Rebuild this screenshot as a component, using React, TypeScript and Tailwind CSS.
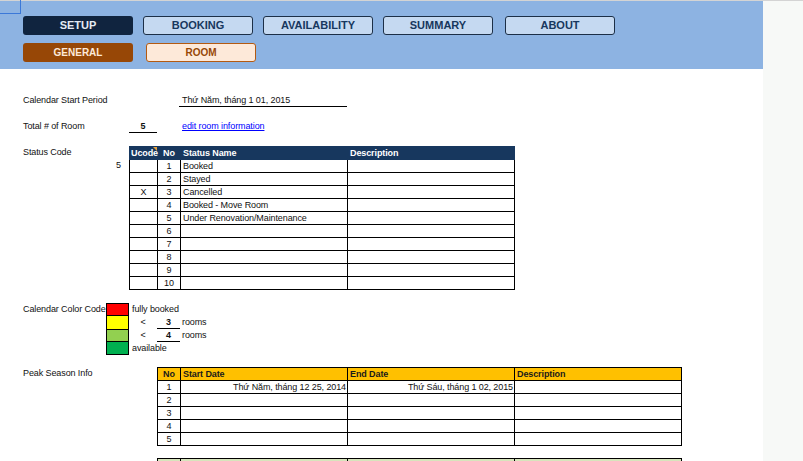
import React from "react";

const font = { fontFamily: '"Liberation Sans", Arial, sans-serif' };

const statusRows = [
  { ucode: "", no: 1, name: "Booked" },
  { ucode: "", no: 2, name: "Stayed" },
  { ucode: "X", no: 3, name: "Cancelled" },
  { ucode: "", no: 4, name: "Booked - Move Room" },
  { ucode: "", no: 5, name: "Under Renovation/Maintenance" },
  { ucode: "", no: 6, name: "" },
  { ucode: "", no: 7, name: "" },
  { ucode: "", no: 8, name: "" },
  { ucode: "", no: 9, name: "" },
  { ucode: "", no: 10, name: "" },
];

const peakRows = [
  { no: 1, start: "Thứ Năm, tháng 12 25, 2014", end: "Thứ Sáu, tháng 1 02, 2015" },
  { no: 2, start: "", end: "" },
  { no: 3, start: "", end: "" },
  { no: 4, start: "", end: "" },
  { no: 5, start: "", end: "" },
];

function NavButton({ label, active }: { label: string; active?: boolean }) {
  return (
    <div
      className={`w-[110px] h-[19px] rounded-[3px] flex items-center justify-center text-[11px] font-bold tracking-normal ${
        active
          ? "bg-[#10243f] text-[#e4ebf4]"
          : "bg-[#c5d9f1] text-[#17375e] border-[1.5px] border-[#1c2f47]"
      }`}
    >
      {label}
    </div>
  );
}

function SubButton({ label, active }: { label: string; active?: boolean }) {
  return (
    <div
      className={`w-[110px] h-[19px] rounded-[3px] flex items-center justify-center text-[10px] font-bold tracking-normal ${
        active
          ? "bg-[#974706] text-[#fde9d9]"
          : "bg-[#fde9d9] text-[#974706] border-[1.5px] border-[#b35a12]"
      }`}
    >
      {label}
    </div>
  );
}

export default function App() {
  return (
    <div className="relative w-[803px] h-[461px] overflow-hidden bg-white flex items-start text-[9px] tracking-[-0.1px] text-[#111]" style={font}>
      <div className="w-[763px] shrink-0">
        {/* grid strip */}
        <div className="h-[1px] bg-[#d4d4d4]" />
        {/* nav panel */}
        <div className="h-[68px] bg-[#8db3e2] pl-[23px] pt-[15px]">
          <div className="flex gap-[10px]">
            <NavButton label="SETUP" active />
            <NavButton label="BOOKING" />
            <NavButton label="AVAILABILITY" />
            <NavButton label="SUMMARY" />
            <div className="ml-[2px]">
              <NavButton label="ABOUT" />
            </div>
          </div>
          <div className="flex gap-[13px] mt-[8px]">
            <SubButton label="GENERAL" active />
            <SubButton label="ROOM" />
          </div>
        </div>

        {/* Calendar start */}
        <div className="flex h-[13px] mt-[25px] items-center">
          <div className="w-[179px] pl-[23px]">Calendar Start Period</div>
          <div className="w-[168px] h-[13px] border-b border-black pl-[3px] leading-[12px]">Thứ Năm, tháng 1 01, 2015</div>
        </div>

        {/* Total rooms */}
        <div className="flex h-[13px] mt-[13px] items-center">
          <div className="w-[129px] pl-[23px]">Total # of Room</div>
          <div className="w-[28px] h-[13px] border-b border-black text-center font-bold leading-[12px]">5</div>
          <div className="w-[25px]" />
          <span className="text-[#0000ff] underline">edit room information</span>
        </div>

        {/* Status code */}
        <div className="flex mt-[13px]">
          <div className="w-[129px] flex flex-col">
            <div className="h-[13px] pl-[23px] leading-[13px]">Status Code</div>
            <div className="h-[13px] text-right pr-[8px] leading-[13px]">5</div>
          </div>
          <table className="border-collapse table-fixed w-[386px]">
            <colgroup>
              <col className="w-[28px]" />
              <col className="w-[23px]" />
              <col className="w-[167px]" />
              <col className="w-[167px]" />
            </colgroup>
            <thead>
              <tr className="h-[13px] bg-[#17375e] text-white font-bold">
                <td className="relative border border-[#17375e] pl-[1px] leading-[11px]">
                  Ucode
                  <span className="absolute right-0 top-0 w-0 h-0 border-l-[4px] border-l-transparent border-t-[4px] border-t-[#e6a23c]" />
                </td>
                <td className="border border-[#17375e] border-l-[#5a7394] text-center leading-[11px]">No</td>
                <td className="border border-[#17375e] border-l-[#5a7394] pl-[2px] leading-[11px]">Status Name</td>
                <td className="border border-[#17375e] border-l-[#5a7394] pl-[2px] leading-[11px]">Description</td>
              </tr>
            </thead>
            <tbody>
              {statusRows.map((r) => (
                <tr key={r.no} className="h-[13px]">
                  <td className="border border-black text-center leading-[11px]">{r.ucode}</td>
                  <td className="border border-black text-center leading-[11px]">{r.no}</td>
                  <td className="border border-black pl-[2px] leading-[11px]">{r.name}</td>
                  <td className="border border-black leading-[11px]"></td>
                </tr>
              ))}
            </tbody>
          </table>
        </div>

        {/* Calendar color code */}
        <div className="flex mt-[13px]">
          <div className="w-[106px] pl-[23px] h-[13px] leading-[13px]">Calendar Color Code</div>
          <div className="flex flex-col">
            <div className="flex h-[13px] items-center">
              <div className="w-[23px] h-[13px] bg-[#ff0000] border border-black" />
              <span className="pl-[3px]">fully booked</span>
            </div>
            <div className="flex h-[13px] items-center">
              <div className="w-[23px] h-[13px] bg-[#ffff00] border-x border-black" />
              <div className="w-[28px] text-center">&lt;</div>
              <div className="w-[23px] h-[13px] border-b border-black text-center font-bold leading-[12px]">3</div>
              <span className="pl-[2px]">rooms</span>
            </div>
            <div className="flex h-[13px] items-center">
              <div className="w-[23px] h-[13px] bg-[#92d050] border border-black" />
              <div className="w-[28px] text-center">&lt;</div>
              <div className="w-[23px] h-[13px] border-b border-black text-center font-bold leading-[12px]">4</div>
              <span className="pl-[2px]">rooms</span>
            </div>
            <div className="flex h-[13px] items-center">
              <div className="w-[23px] h-[13px] bg-[#00b050] border-x border-b border-black" />
              <span className="pl-[3px]">available</span>
            </div>
          </div>
        </div>

        {/* Peak season */}
        <div className="flex mt-[12px]">
          <div className="w-[157px] pl-[23px] h-[13px] leading-[13px]">Peak Season Info</div>
          <table className="border-collapse table-fixed w-[525px]">
            <colgroup>
              <col className="w-[23px]" />
              <col className="w-[167px]" />
              <col className="w-[167px]" />
              <col className="w-[167px]" />
            </colgroup>
            <thead>
              <tr className="h-[13px] bg-[#ffc000] font-bold text-[#1a1a1a]">
                <td className="border border-black text-center leading-[11px]">No</td>
                <td className="border border-black pl-[2px] leading-[11px]">Start Date</td>
                <td className="border border-black pl-[2px] leading-[11px]">End Date</td>
                <td className="border border-black pl-[2px] leading-[11px]">Description</td>
              </tr>
            </thead>
            <tbody>
              {peakRows.map((r) => (
                <tr key={r.no} className="h-[13px]">
                  <td className="border border-black text-center leading-[11px]">{r.no}</td>
                  <td className="border border-black text-right pr-[1px] leading-[11px]">{r.start}</td>
                  <td className="border border-black text-right pr-[1px] leading-[11px]">{r.end}</td>
                  <td className="border border-black leading-[11px]"></td>
                </tr>
              ))}
            </tbody>
          </table>
        </div>

        {/* next table (cut off) */}
        <div className="flex mt-[12px]">
          <div className="w-[157px]" />
          <table className="border-collapse table-fixed w-[525px]">
            <colgroup>
              <col className="w-[23px]" />
              <col className="w-[167px]" />
              <col className="w-[167px]" />
              <col className="w-[167px]" />
            </colgroup>
            <tbody>
              <tr className="h-[13px] bg-[#d7e4bc]">
                <td className="border border-black"></td>
                <td className="border border-black"></td>
                <td className="border border-black"></td>
                <td className="border border-black"></td>
              </tr>
            </tbody>
          </table>
        </div>
      </div>

      {/* side gutter */}
      <div className="flex-1 self-stretch bg-[#f7f9f7] border-t border-[#d4d4d4]" />

      {/* selected cell outline */}
      <div className="absolute left-0 top-0 w-[21px] h-[14px] border-r border-b border-[#3b78d8]" />
    </div>
  );
}
